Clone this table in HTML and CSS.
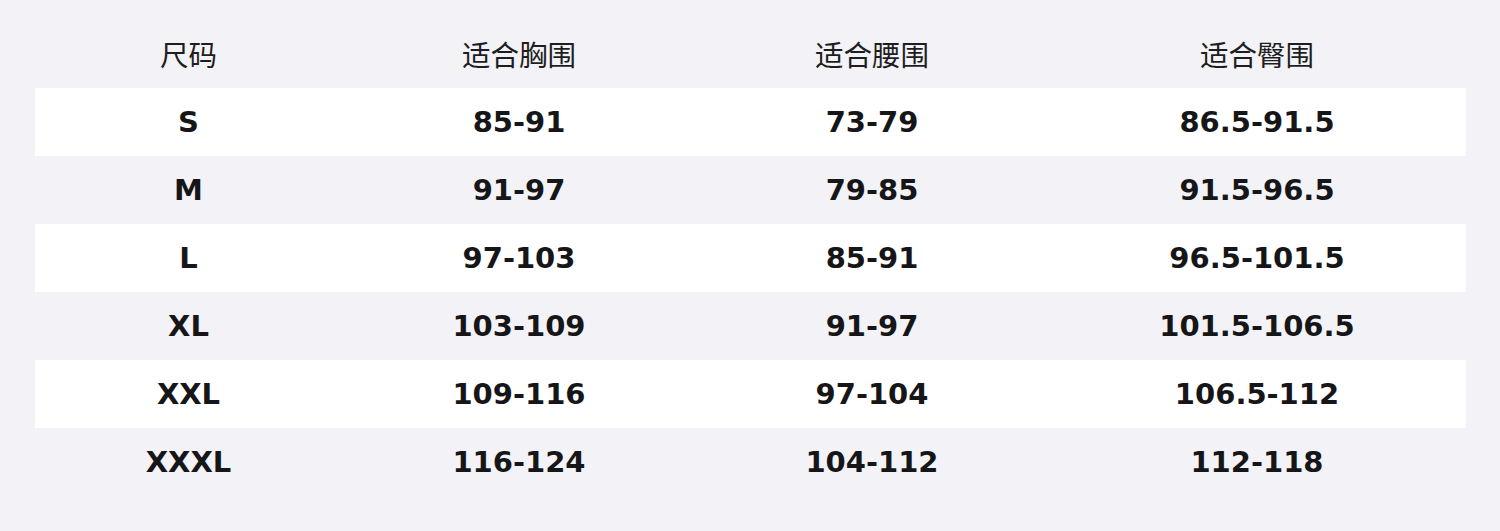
FILE: index.html
```html
<!DOCTYPE html>
<html lang="zh">
<head>
<meta charset="utf-8">
<title>尺码表</title>
<link rel="stylesheet" href="styles.css">
</head>
<body>
<main class="sheet">
  <table class="size-table">
    <colgroup>
      <col class="c1"><col class="c2"><col class="c3"><col class="c4">
    </colgroup>
    <thead>
      <tr><th>尺码</th><th>适合胸围</th><th>适合腰围</th><th>适合臀围</th></tr>
    </thead>
    <tbody>
      <tr><td>S</td><td>85-91</td><td>73-79</td><td>86.5-91.5</td></tr>
      <tr><td>M</td><td>91-97</td><td>79-85</td><td>91.5-96.5</td></tr>
      <tr><td>L</td><td>97-103</td><td>85-91</td><td>96.5-101.5</td></tr>
      <tr><td>XL</td><td>103-109</td><td>91-97</td><td>101.5-106.5</td></tr>
      <tr><td>XXL</td><td>109-116</td><td>97-104</td><td>106.5-112</td></tr>
      <tr><td>XXXL</td><td>116-124</td><td>104-112</td><td>112-118</td></tr>
    </tbody>
  </table>
</main>
</body>
</html>
```
FILE: styles.css
```css
html, body {
  margin: 0;
  padding: 0;
  background: #f3f3f7;
}
.sheet {
  padding: 20px 34px 35px 35px;
}
.size-table {
  width: 1431px;
  border-collapse: collapse;
  table-layout: fixed;
  font-family: "DejaVu Sans", "Noto Sans CJK SC", sans-serif;
  color: #161618;
}
.c1 { width: 307px; }
.c2 { width: 354px; }
.c3 { width: 352px; }
.c4 { width: 418px; }
.size-table th {
  height: 68px;
  padding: 0;
  font-family: "Noto Sans CJK SC", sans-serif;
  font-weight: 400;
  font-size: 28.5px;
  color: #1e1e22;
  text-align: center;
  vertical-align: middle;
  line-height: 1;
}
.size-table td {
  height: 68px;
  padding: 0;
  font-size: 29px;
  font-weight: 700;
  text-align: center;
  vertical-align: middle;
  line-height: 1;
}
.size-table tbody tr:nth-child(odd) {
  background: #ffffff;
}
```
